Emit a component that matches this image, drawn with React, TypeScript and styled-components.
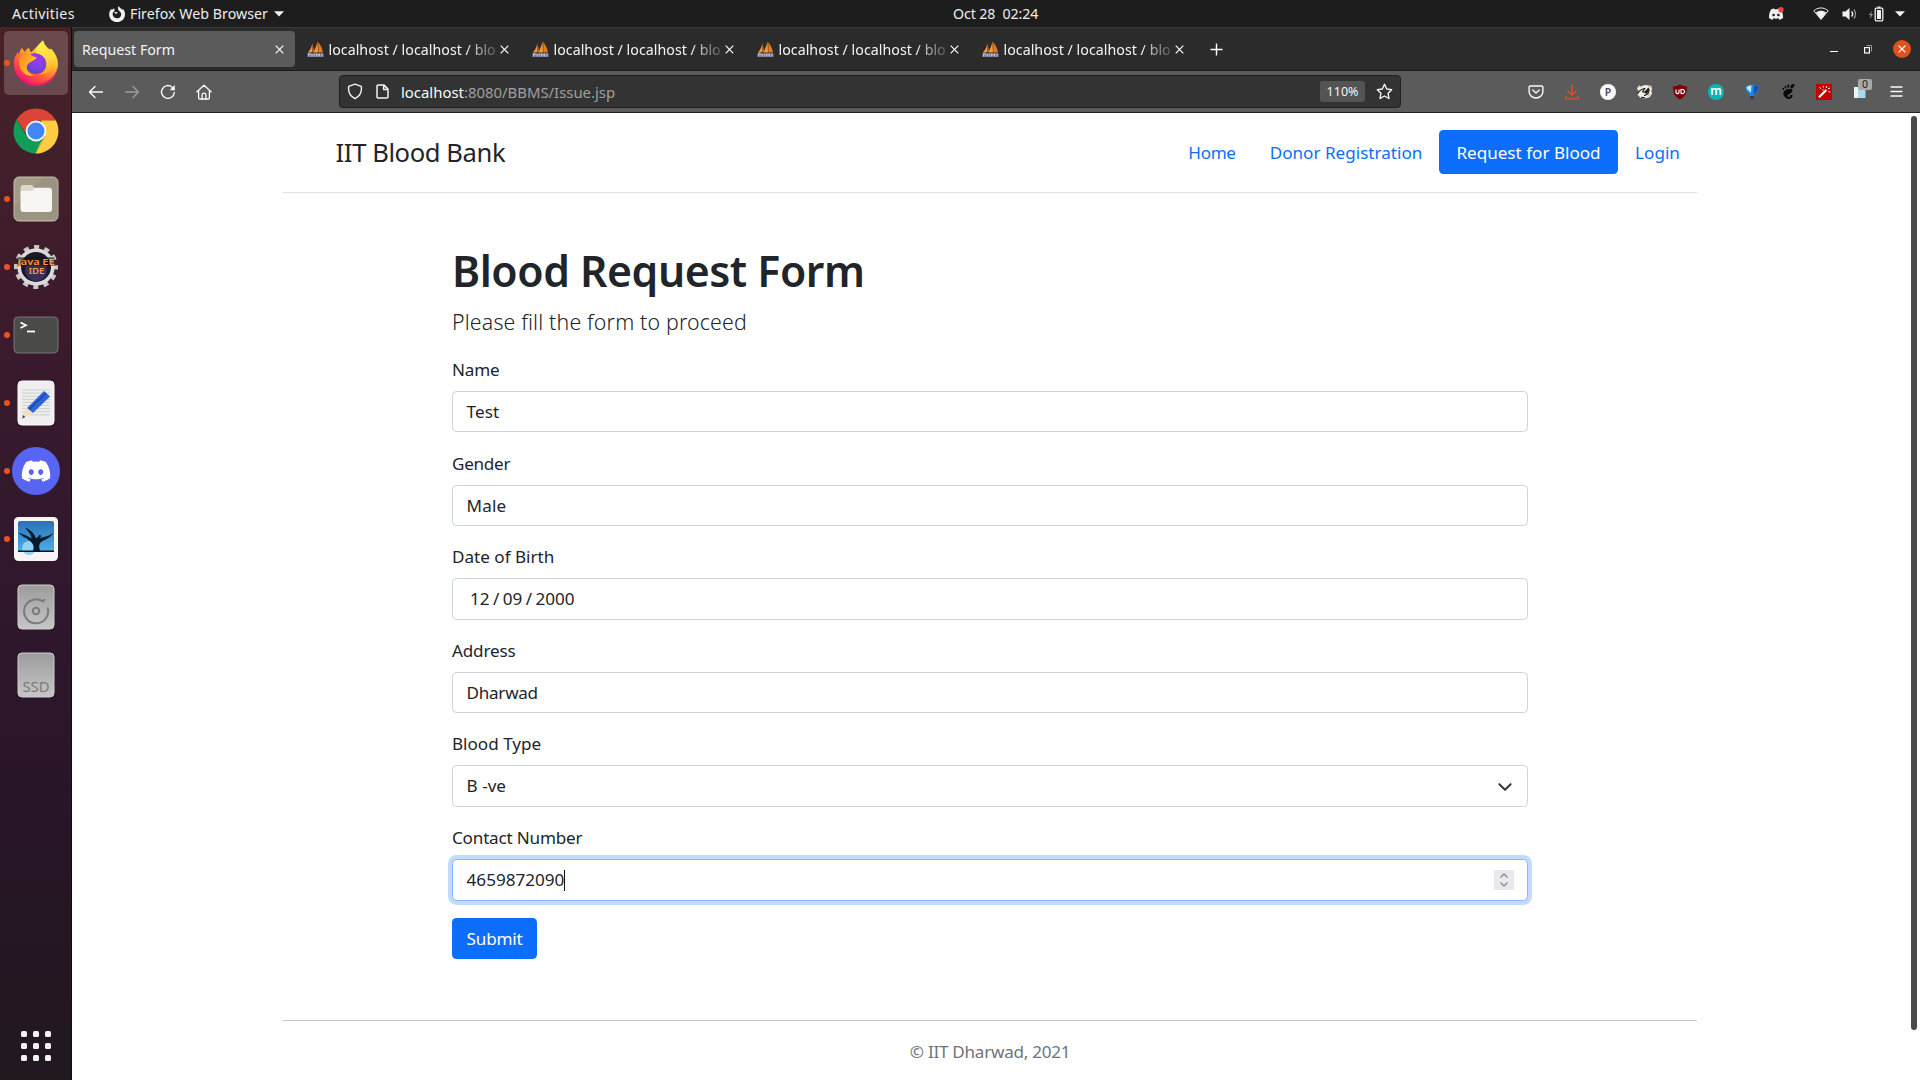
import React from 'react';
import styled, { createGlobalStyle, css } from 'styled-components';
import { FaDiscord } from 'react-icons/fa';
import { SiGnome } from 'react-icons/si';

const GlobalStyle = createGlobalStyle`
  *, *::before, *::after { box-sizing: border-box; }
  body {
    margin: 0;
    background: #fff;
    overflow: hidden;
    font-family: "Noto Sans", "Open Sans", sans-serif;
  }
  svg { display: block; flex: none; }
`;

/* ---------- desktop shell ---------- */

const Desktop = styled.div`
  display: flex;
  flex-direction: column;
  width: 1920px;
  height: 1080px;
  overflow: hidden;
`;

const SystemBar = styled.div`
  display: grid;
  grid-template-columns: 1fr 86px 1fr;
  align-items: center;
  flex: none;
  height: 27px;
  padding-left: 72px;
  background: #1d1d1d;
  color: #ededed;
  font-size: 14.2px;
  line-height: 26px;
  white-space: pre;
`;

const SystemLeft = styled.div`
  display: flex;
  align-items: center;
  margin-left: -60px;
`;

const Activities = styled.span`
  letter-spacing: 0.38px;
  width: 97px;
`;

const AppMenu = styled.div`
  display: flex;
  align-items: center;

  span {
    margin: 0 6px 0 5px;
    letter-spacing: 0.04px;
  }
`;

const Clock = styled.div`
  letter-spacing: -0.1px;
`;

const Tray = styled.div`
  display: flex;
  align-items: center;
  justify-content: flex-end;
  padding-right: 15px;
`;

const TrayIcon = styled.span<{ $gap: number }>`
  margin-left: ${(p) => p.$gap}px;
`;

const Workspace = styled.div`
  display: flex;
  flex: 1;
  min-height: 0;
`;

/* ---------- dock ---------- */

const Dock = styled.nav`
  display: flex;
  flex-direction: column;
  flex: none;
  width: 72px;
  padding-top: 2px;
  border-right: 1px solid #120a10;
  background: linear-gradient(
    180deg,
    #4a2023 0%,
    #42202a 11%,
    #3d1b2c 24%,
    #35192d 42%,
    #2f172c 56%,
    #291528 72%,
    #241723 88%,
    #211820 100%
  );
`;

const DockItem = styled.div`
  display: grid;
  grid-template-columns: 10px 52px;
  align-items: center;
  height: 68px;
`;

const RunningDot = styled.i<{ $on?: boolean }>`
  width: 6px;
  height: 6px;
  margin-left: 4px;
  border-radius: 50%;
  background: ${(p) => (p.$on ? '#e95420' : 'transparent')};
  z-index: 1;
`;

const DockTile = styled.div<{ $active?: boolean }>`
  display: flex;
  align-items: center;
  justify-content: center;
  width: 64px;
  height: 64px;
  margin-left: -6px;
  border-radius: 5px;
  background: ${(p) => (p.$active ? 'rgba(255,255,255,0.19)' : 'transparent')};
`;

const AppGrid = styled.div`
  display: grid;
  grid-template-columns: repeat(3, 6px);
  grid-auto-rows: 6px;
  gap: 6px;
  margin: auto 0 19px 21px;

  i {
    border-radius: 1.5px;
    background: #f3f1f0;
  }
`;

/* ---------- browser chrome ---------- */

const Browser = styled.main`
  display: flex;
  flex-direction: column;
  flex: 1;
  min-width: 0;
`;

const TabBar = styled.div`
  display: flex;
  align-items: center;
  height: 44px;
  padding: 0 9px 0 2px;
  border-top: 1px solid #3a3a3a;
  border-bottom: 1px solid #1a1a1a;
  background: #2b2b2b;
  color: #f4f4f4;
  font-size: 14.2px;
  line-height: 20px;
  white-space: nowrap;
`;

const Tab = styled.div<{ $active?: boolean }>`
  display: flex;
  align-items: center;
  height: 36px;
  ${(p) =>
    p.$active
      ? css`
          width: 221px;
          margin-right: 2px;
          padding: 0 11px 0 8px;
          border-radius: 4px;
          background: #5b5b5b;
        `
      : css`
          width: 225px;
          padding: 0 13.5px 0 9.5px;
        `}
`;

const TabTitle = styled.span<{ $fade?: boolean }>`
  flex: 1;
  padding-top: 2px;
  overflow: hidden;
  ${(p) =>
    p.$fade &&
    css`
      margin-left: 5px;
      letter-spacing: 0.04px;
      mask-image: linear-gradient(90deg, #000 136px, rgba(0, 0, 0, 0.12) 170px);
    `}
`;

const TabStripEnd = styled.div`
  display: flex;
  align-items: center;
  justify-content: space-between;
  flex: 1;
  padding-left: 13px;
`;

const WindowButtons = styled.div`
  display: flex;
  align-items: center;
`;

const Minimise = styled.i`
  width: 8px;
  height: 1px;
  margin: 5px 26px 0 0;
  background: #fff;
`;

const CloseWindow = styled.div`
  display: flex;
  align-items: center;
  justify-content: center;
  width: 18px;
  height: 18px;
  margin-left: 21px;
  border-radius: 50%;
  background: #e2501c;
`;

const NavBar = styled.div`
  display: flex;
  align-items: center;
  height: 42px;
  border-bottom: 1px solid #202020;
  background: #5b5b5b;
  color: #fbfbfb;
`;

const NavButtons = styled.div`
  display: flex;
  align-items: center;
  width: 267px;
  padding-left: 16px;
  gap: 20px;
`;

const UrlBar = styled.div`
  display: flex;
  align-items: center;
  width: 1062px;
  height: 33px;
  padding: 0 7px;
  border: 1px solid #1f1f1f;
  border-radius: 4px;
  background: #333;
`;

const UrlIcons = styled.span`
  display: flex;
  align-items: center;
  gap: 13px;
`;

const Address = styled.span`
  flex: 1;
  margin-left: 12px;
  color: #a0a0a0;
  font-size: 14.9px;
  line-height: 20px;

  b {
    color: #fbfbfb;
    font-weight: 400;
  }
`;

const ZoomChip = styled.span`
  width: 45px;
  height: 21px;
  margin-right: 11px;
  border-radius: 3px;
  background: #545454;
  color: #f5f5f5;
  font-size: 12.5px;
  line-height: 21px;
  text-align: center;
`;

const Extensions = styled.div`
  display: grid;
  grid-template-columns: repeat(11, 36px);
  justify-items: center;
  align-items: center;
  margin-left: 117px;
`;

const RoundBadge = styled.span<{ $teal?: boolean }>`
  width: 16px;
  height: 16px;
  border-radius: 50%;
  background: ${(p) => (p.$teal ? '#08b5b5' : '#fafafa')};
  color: ${(p) => (p.$teal ? '#fff' : '#4c4c4c')};
  font-size: ${(p) => (p.$teal ? 12 : 10.5)}px;
  font-weight: 600;
  line-height: ${(p) => (p.$teal ? 14 : 16)}px;
  text-align: center;
`;

const NoteButton = styled.span`
  position: relative;
`;

const NoteCount = styled.span`
  position: absolute;
  top: -6px;
  left: 4px;
  width: 14px;
  height: 11px;
  border-radius: 2px;
  background: #a9a9a9;
  color: #1c1c1c;
  font-size: 10.5px;
  line-height: 11px;
  text-align: center;
`;

/* ---------- web page ---------- */

const Viewport = styled.div`
  display: flex;
  justify-content: space-between;
  flex: 1;
  min-height: 0;
  background: #fff;
  color: #212529;
  font-size: 17.1px;
  line-height: 26.4px;
`;

const Page = styled.div`
  width: 1414px;
  margin-left: 211px;
`;

const ScrollThumb = styled.div`
  width: 6px;
  height: 914px;
  margin: 3px 3px 0 0;
  border-radius: 3px;
  background: #4a4a4a;
`;

const SiteHeader = styled.header`
  display: flex;
  align-items: center;
  justify-content: space-between;
  height: 80px;
  padding: 0 0 2px 52.6px;
  border-bottom: 1px solid #dee2e6;
`;

const Brand = styled.span`
  padding-top: 3px;
  font-size: 25.6px;
  letter-spacing: -0.41px;
`;

const SiteNav = styled.nav`
  display: flex;
`;

const NavLink = styled.a<{ $active?: boolean; $width: number; $track?: number }>`
  width: ${(p) => p.$width}px;
  height: 44px;
  border-radius: 4.4px;
  background: ${(p) => (p.$active ? '#0d6efd' : 'transparent')};
  color: ${(p) => (p.$active ? '#fff' : '#0d6efd')};
  letter-spacing: ${(p) => p.$track ?? 0}px;
  line-height: 45px;
  text-align: center;
`;

const FormColumn = styled.form`
  width: 1076px;
  margin: 51px auto 0 169px;
`;

const Title = styled.h1`
  margin: 0;
  font-size: 42.7px;
  font-weight: 600;
  line-height: 53px;
  letter-spacing: -0.44px;
`;

const Lead = styled.p`
  margin: 8px 0 18px;
  font-size: 21.3px;
  font-weight: 300;
  line-height: 33px;
  letter-spacing: 0.18px;
`;

const Field = styled.div`
  height: 93.6px;
`;

const Label = styled.label<{ $track?: number }>`
  display: block;
  padding-top: 1px;
  margin-bottom: 7.7px;
  letter-spacing: ${(p) => p.$track ?? 0}px;
`;

const Control = styled.div<{ $tall?: boolean; $focus?: boolean; $track?: number }>`
  display: flex;
  align-items: center;
  justify-content: space-between;
  height: ${(p) => (p.$tall ? 41.7 : 41.1)}px;
  padding: 1px 13px 0 13.6px;
  border: 1px solid ${(p) => (p.$focus ? '#86b7fe' : '#ced4da')};
  border-radius: 4.4px;
  background: #fff;
  letter-spacing: ${(p) => p.$track ?? 0}px;
  ${(p) =>
    p.$focus &&
    css`
      box-shadow: 0 0 0 4px #c2dbfe;
    `}
`;

const DateParts = styled.span`
  display: flex;
  gap: 3.4px;
  padding-left: 3.4px;
`;

const Caret = styled.span`
  display: flex;
  align-items: center;

  &::after {
    content: '';
    width: 1px;
    height: 21px;
    background: #111;
  }
`;

const Spinner = styled.span`
  display: flex;
  align-items: center;
  justify-content: center;
  width: 20px;
  height: 20px;
  background: #e9e9ed;
`;

const Submit = styled.button`
  display: block;
  width: 85px;
  height: 41px;
  padding: 0;
  border: 0;
  border-radius: 4.4px;
  background: #0d6efd;
  color: #fff;
  font: inherit;
  line-height: 41px;
  letter-spacing: -0.2px;
`;

const SiteFooter = styled.footer`
  margin-top: 61px;
  padding-top: 18px;
  border-top: 1px solid #c4c5c6;
  color: #6c757d;
  letter-spacing: -0.27px;
  text-align: center;
`;

/* ---------- dock artwork ---------- */

const FirefoxArt = () => (
  <svg width="46" height="48" viewBox="0 0 46 48">
    <defs>
      <linearGradient id="ffBody" x1="0.85" y1="0.1" x2="0.25" y2="0.95">
        <stop offset="0" stopColor="#fff44f" />
        <stop offset="0.35" stopColor="#ffb52a" />
        <stop offset="0.62" stopColor="#ff6a33" />
        <stop offset="0.85" stopColor="#fb3452" />
        <stop offset="1" stopColor="#e3127c" />
      </linearGradient>
      <radialGradient id="ffGlobe" cx="0.6" cy="0.3" r="0.75">
        <stop offset="0" stopColor="#a235e6" />
        <stop offset="0.55" stopColor="#7a44e8" />
        <stop offset="1" stopColor="#5547b8" />
      </radialGradient>
      <linearGradient id="ffHead" x1="0" y1="0" x2="1" y2="0.6">
        <stop offset="0" stopColor="#ff8a1e" />
        <stop offset="1" stopColor="#ffc53a" />
      </linearGradient>
      <linearGradient id="ffTail" x1="0.4" y1="0" x2="0.6" y2="1">
        <stop offset="0" stopColor="#fff24a" />
        <stop offset="0.6" stopColor="#ffd43b" />
        <stop offset="1" stopColor="#ff9a2c" />
      </linearGradient>
    </defs>
    <path d="M9 9c1 1 2 3 2.600 4 1.500-2.400 3-3.800 4.600-4.600 0 2 .8 3.600 2 4.800L30 1.500c1 4 3.500 7 6.500 9.500l1.500-1.500c4.500 5 7 10 7 15.500C45 37.500 35 47 23 47S.8 37.500.8 25C.8 19 3.500 14.500 5 13c0 1 .3 2 .7 2.800C6.300 13 7.500 10.500 9 9z" fill="url(#ffBody)" />
    <path d="M2 31c3 9 11 14 20 14 11 0 20-7 22.500-17C44 40 34.500 47 23 47 12.500 47 4 40.500 2 31z" fill="#e3127c" opacity=".75" />
    <circle cx="23" cy="24.500" r="10.500" fill="url(#ffGlobe)" />
    <path d="M30 1.500c-4.500 3.500-7.300 8-7 13 6 .5 10 4.500 10.500 10 .3 5-2.500 9.500-7 11 8 0 14.500-5 15.500-13 0-5-2-8.500-4.500-11.500C33.500 8.500 31 5.500 30 1.500z" fill="url(#ffTail)" />
    <path d="M6 20c2-3.500 6-5.500 9.500-5 3 .5 4.500 3 8 3.200 0 2-3 3.300-5 4.200-3.500 1.500-5.500 4.600-4.500 8 1 3.500 4.500 5.500 8.500 5.500-6 2.500-13.500-1-15.500-7.500C6.200 25.500 6 22.500 6 20z" fill="url(#ffHead)" />
  </svg>
);

const ChromeArt = () => (
  <svg width="46" height="46" viewBox="-23 -23 46 46">
    <path d="M-19.500-11.200A22.500 22.500 0 0 1 19.500-11.200L19.500-10.200H0L-9.600 3z" fill="#db4437" />
    <path d="M-19.500-11.200A22.500 22.500 0 0 0-.6 22.500L9 5.500-9 5.200z" fill="#109d58" />
    <path d="M19.900-10.400A22.500 22.500 0 0 1-.6 22.500L9 5.200 5-10.400z" fill="#ffcd41" />
    <path d="M10 4L-.6 22.500 4 12z" fill="#d9a52c" />
    <circle r="10.400" fill="#f4f6fb" />
    <circle r="8.500" fill="#4285f4" />
  </svg>
);

const FilesArt = () => (
  <svg width="46" height="46" viewBox="0 0 46 46">
    <rect x="1" y="1" width="44" height="44" rx="5" fill="#a49c89" stroke="#c9c1ad" strokeWidth="1" />
    <path d="M1.500 30L30 1.500H41a4 4 0 0 1 4 4V40a4 4 0 0 1-4 4H5a4 4 0 0 1-3.500-4z" fill="#968e7c" opacity=".55" />
    <path d="M7.500 12a3 3 0 0 1 3-3h7.500c2 0 2.500 3 4.500 3H37v6H7.500z" fill="#dcd6c8" />
    <path d="M7.500 17c0-1.500 1-2.200 2.500-2.200h8.500c2 0 2.500-3 4.500-3H36a3 3 0 0 1 3 3V33a3 3 0 0 1-3 3H10.500a3 3 0 0 1-3-3z" fill="#f7f6f5" />
  </svg>
);

const EclipseArt = () => (
  <svg width="46" height="46" viewBox="-23 -23 46 46">
    <circle r="19.500" fill="none" stroke="#c9c9c9" strokeWidth="5" strokeDasharray="5 5.210" strokeDashoffset="2.500" />
    <circle r="16.800" fill="#1d1726" stroke="#dadada" strokeWidth="3.600" />
    <circle r="11" cy="3" fill="#4a3a77" opacity=".65" />
    <path d="M-18.500-9.800h37v8.600h-37z" fill="#1a1210" opacity=".65" />
    <g fill="#ff9a3c" fontFamily="Noto Sans, sans-serif" fontWeight="600" fontSize="9.400">
      <text x="-18.500" y="-2.400" textLength="37" lengthAdjust="spacingAndGlyphs">Java EE</text>
      <text x="-7.500" y="7.400" textLength="16" lengthAdjust="spacingAndGlyphs">IDE</text>
    </g>
  </svg>
);

const TerminalArt = () => (
  <svg width="46" height="38" viewBox="0 0 46 38">
    <rect x="1" y="1" width="44" height="36" rx="4" fill="#4b4b4a" stroke="#777" />
    <path d="M7.500 6.500L13 9.300 7.500 12" fill="none" stroke="#fff" strokeWidth="1.800" />
    <path d="M14 15.500h8" stroke="#fff" strokeWidth="1.800" />
  </svg>
);

const EditorArt = () => (
  <svg width="38" height="46" viewBox="0 0 38 46">
    <rect x="1" y="1" width="36" height="44" rx="4" fill="#efefef" stroke="#fafafa" />
    <path d="M5 10h28M5 13.100h28M5 16.200h28M5 19.300h28M5 22.400h28M5 25.500h28M5 28.600h28M5 31.700h28M5 34.800h28" stroke="#c9c9c9" strokeWidth=".9" />
    <path d="M27 11l6 5.500L16 33l-6-5z" fill="#2f65dc" />
    <path d="M29 13.200l-17 16.500" stroke="#1f4bb4" strokeWidth="1.800" />
    <path d="M10 28l5.500 5L5 38z" fill="#fbdcb8" />
    <path d="M6.300 35.200l2 1.800L5 38.500z" fill="#333" />
  </svg>
);

const DiscordArt = () => (
  <svg width="48" height="48" viewBox="0 0 48 48">
    <circle cx="24" cy="24" r="24" fill="#5865f2" />
    <g transform="translate(8.500 8.500)">
      <FaDiscord size={31} color="#fff" />
    </g>
  </svg>
);

const ImageViewerArt = () => (
  <svg width="46" height="46" viewBox="0 0 46 46">
    <defs>
      <linearGradient id="sky" x1="0" y1="0" x2="0" y2="1">
        <stop offset="0" stopColor="#2b71b4" />
        <stop offset="1" stopColor="#4cb0e8" />
      </linearGradient>
    </defs>
    <rect x="1" y="1" width="44" height="44" rx="4.500" fill="#f6f6f6" />
    <rect x="5" y="5" width="36" height="31" rx="2" fill="url(#sky)" />
    <circle cx="16" cy="32" r="7" fill="#8fd3f5" />
    <path d="M5 34.500h36V36H5z" fill="#06121f" />
    <path d="M20 35c1-4 .8-6-1.500-8.500C16 23 10 21.500 5.500 16.500c5 2.500 9.500 3 13 6 0-4-4-8-6.500-11C18.500 14 21.500 18 23 22.500c1-.8 2.500-1.800 3-3.500l2.500.5c-.5 1.500-1.200 2.200-2 3.300 3.500-2.200 8.500-1.600 14-6.300C37 23 31 23.500 27.500 26.500c-1.800 2-1.600 5-.3 8.500z" fill="#071a2c" />
  </svg>
);

const DriveArt = ({ ssd }: { ssd?: boolean }) => (
  <svg width="38" height="46" viewBox="0 0 38 46">
    <defs>
      <linearGradient id="drive" x1="0" y1="0" x2="0" y2="1">
        <stop offset="0" stopColor="#9c9c9c" />
        <stop offset="1" stopColor="#c6c6c6" />
      </linearGradient>
    </defs>
    <rect x="1" y="1" width="36" height="44" rx="4" fill="url(#drive)" stroke="#cfcfcf" />
    {ssd ? (
      <text x="5.500" y="39.500" textLength="27" lengthAdjust="spacingAndGlyphs" fontFamily="Noto Sans, sans-serif" fontSize="14.800" fill="#7b7b7b">SSD</text>
    ) : (
      <g fill="none" stroke="#7b7b7b" strokeWidth="2">
        <path d="M30.500 23.500a12 12 0 1 1-4.500-6l2-2.500" />
        <circle cx="19" cy="27" r="3.200" />
      </g>
    )}
  </svg>
);

/* ---------- small glyphs ---------- */

const CloseGlyph = ({ size = 9, width = 1.2 }: { size?: number; width?: number }) => (
  <svg width={size} height={size} viewBox="0 0 9 9">
    <path d="M.7.7l7.600 7.600M8.300.7L.7 8.300" stroke="#fff" strokeWidth={width} />
  </svg>
);

const CaretDown = () => (
  <svg width="10" height="6" viewBox="0 0 10 6">
    <path d="M0 .3h10L5 5.500z" fill="#f2f2f2" />
  </svg>
);

const FirefoxMono = () => (
  <svg width="16" height="16" viewBox="0 0 16 16">
    <path d="M9.600 0c.6 1.500 2.500 2.300 3.800 4l.4-1.200C15.200 4.300 16 6.200 16 8.400 16 12.600 12.400 16 8 16S.2 12.600.2 8.400C.2 6 1 4.200 2.400 2.700l.4 1.500C3.500 3.200 4.500 2.600 5.300 2.500L5.700 5c-1.300.6-2.100 1.800-2.100 3.300C3.600 10.600 5.600 12.300 8 12.300s4.200-1.500 4.200-3.900c0-1.700-.8-2.500-1.900-3.400C8.800 3.800 8.600 1.500 9.600 0zM5 6.200l3.600-.1c-.1 1.100-.8 1.500-1.700 1.900z" fill="#f2f2f2" />
  </svg>
);

const Sails = () => (
  <svg width="17" height="17" viewBox="0 0 17 17">
    <path d="M5.500 1.500C5 5.500 3.500 8.500.8 11.800l4.200-.6zM10.500.2C9.500 5 8 8.500 6 11.500h5z" fill="#f29a3c" />
    <path d="M11.300 1c1.800 3 4.200 6 4.700 10.500h-4.700zM5.800 3l1 6.500-1.600 2z" fill="#ec7b12" />
    <path d="M.5 12.200h16V16H.5z" fill="#77769a" />
    <path d="M1.500 15.500v-2.700h1.700v1.400M5 15.500v-2.700M7.200 12.800v2.700M9.500 15.500v-2.700l1.500 1.500 1.500-1.500v2.700M15 12.800v2.700" stroke="#d7d6ea" strokeWidth=".8" fill="none" />
  </svg>
);

const Arrow = ({ forward }: { forward?: boolean }) => (
  <svg width="16" height="16" viewBox="0 0 16 16" fill="none" stroke="#fbfbfb" strokeWidth="1.400" strokeLinecap="round" strokeLinejoin="round" opacity={forward ? 0.4 : 1}>
    <path d={forward ? 'M1.500 8h13M9 2.500L14.500 8 9 13.500' : 'M14.500 8h-13M7 2.500L1.500 8 7 13.500'} />
  </svg>
);

const Reload = () => (
  <svg width="16" height="16" viewBox="0 0 16 16">
    <path d="M14.300 8.500A6.400 6.400 0 1 1 12.200 3.200" fill="none" stroke="#fbfbfb" strokeWidth="1.400" strokeLinecap="round" />
    <path d="M14.800 1v5.200H9.600z" fill="#fbfbfb" />
  </svg>
);

const Home = () => (
  <svg width="16" height="16" viewBox="0 0 16 16" fill="none" stroke="#fbfbfb" strokeWidth="1.300" strokeLinejoin="round" strokeLinecap="round">
    <path d="M.9 7.800L8 1.200l7.100 6.600M2.600 6.500v7.200c0 .8.500 1.300 1.300 1.300h8.200c.8 0 1.300-.5 1.300-1.300V6.500" />
    <path d="M6.100 15v-4.200c0-1 .6-1.600 1.900-1.600s1.900.6 1.900 1.600V15" />
  </svg>
);

const Shield = () => (
  <svg width="16" height="17" viewBox="0 0 16 17">
    <path d="M8 1.200L14.300 3.300C15 8.500 13 13 8 15.700 3 13 1 8.500 1.700 3.300z" fill="none" stroke="#f5f5f5" strokeWidth="1.400" strokeLinejoin="round" />
  </svg>
);

const PageGlyph = () => (
  <svg width="13" height="15" viewBox="0 0 13 15">
    <path d="M2.300.9h5.500l4.200 4.200v7.700c0 .8-.5 1.300-1.300 1.300H2.300C1.500 14.100 1 13.600 1 12.800V2.200C1 1.400 1.500.9 2.300.9zM7.600 1v4.400H12" fill="none" stroke="#f5f5f5" strokeWidth="1.500" strokeLinejoin="round" />
  </svg>
);

const Star = () => (
  <svg width="17" height="17" viewBox="0 0 17 17">
    <path d="M8.500 1.300l2.200 4.700 5 .7-3.600 3.600.9 5.200-4.500-2.500L4 15.500l.9-5.200L1.300 6.700l5-.7z" fill="none" stroke="#fbfbfb" strokeWidth="1.300" strokeLinejoin="round" />
  </svg>
);

const Pocket = () => (
  <svg width="16" height="14" viewBox="0 0 16 14" fill="none" stroke="#fbfbfb" strokeWidth="1.400" strokeLinecap="round" strokeLinejoin="round">
    <path d="M2.400 1h11.200c.8 0 1.300.5 1.300 1.300v4C14.900 10 12 13 8 13S1.100 10 1.100 6.300v-4C1.100 1.500 1.600 1 2.400 1z" />
    <path d="M4.800 5L8 8l3.200-3" />
  </svg>
);

const Download = () => (
  <svg width="14" height="16" viewBox="0 0 14 16" fill="none" stroke="#e2501c" strokeWidth="1.400" strokeLinecap="round" strokeLinejoin="round">
    <path d="M7 1v10M2.800 7L7 11.200 11.200 7M.8 12.500v1c0 .9.500 1.400 1.400 1.400h9.600c.9 0 1.400-.5 1.400-1.400v-1" />
  </svg>
);

const Badger = () => (
  <svg width="17" height="15" viewBox="0 0 17 15">
    <path d="M.8 4L3 1.500l2.800.8L8.500 1l5 .6 2.200.3.4 3-.8 2.600.8 2-2.500 3.800-5 1.200-4.600-.8L3 12l-2-1.500L2.600 7z" fill="#f4eee4" />
    <path d="M1.300 10.300C2.500 7.500 5.500 5 9 4.200L6.500 7.800l2.300.4 4-4.400M5 13.200l4 .6M8 11.500c2.500 0 4-1.700 5-3.500" fill="none" stroke="#1b1917" strokeWidth="1.100" strokeLinejoin="round" />
    <path d="M8.500 8.500l4.500-4 1 2-4 3.500z" fill="#1b1917" />
    <path d="M1 3.800L3.500 2l2 1M12.500 2l2.800.6v2M14 10l-2 2.500" stroke="#d89a5c" strokeWidth="1" fill="none" />
  </svg>
);

const UBlock = () => (
  <svg width="16" height="16" viewBox="0 0 16 16">
    <path d="M8 .5c2 1.400 4.500 1.700 6.800 1.800.4 6-.8 10.200-6.800 13.200C2 12.500.8 8.300 1.200 2.300 3.500 2.200 6 1.900 8 .5z" fill="#7c0004" />
    <path d="M4 5.500v2.700c0 1.800 3 1.800 3 0V5.500M9 5.500v4c2 .3 3.600-.3 3.600-2S11 5.300 9 5.500z" fill="none" stroke="#fff" strokeWidth="1.200" />
  </svg>
);

const Balloon = () => (
  <svg width="16" height="16" viewBox="0 0 16 16">
    <path d="M8 .8c4 0 6.600 1.400 6.600 3.500C14.600 7 11 9 9.700 12.500H6.300C5 9 1.400 7 1.400 4.300 1.400 2.200 4 .8 8 .8z" fill="#1b87e6" />
    <path d="M2.500 3.200C4 1.500 7 1.300 7.500 1.500L7 8.500C6 7.500 2.500 6 2.500 3.200z" fill="#bfe6ff" />
    <path d="M10 1.300c3 .4 4.300 1.700 4.300 3C14 6.500 11 8.500 9.500 11z" fill="#0b50b4" />
    <path d="M6.500 12h3v2.800h-3z" fill="#24344c" />
  </svg>
);

const Wand = () => (
  <svg width="16" height="16" viewBox="0 0 16 16">
    <path d="M0 0h16v16H0z" fill="#c40000" />
    <path d="M3 13.200L10.300 6" stroke="#fff" strokeWidth="2.200" />
    <path d="M3.500 3.500l1.600 1M7 1.800l.6 1.700M11 2l-.8 2M14 4l-2.200 1M12.500 7.500l1.800.7M6.300 5.800l1.300.2" stroke="#fff" strokeWidth="1" />
  </svg>
);

const Notes = () => (
  <svg width="12" height="14" viewBox="0 0 12 14">
    <path d="M0 2h5v11H0z" fill="#eef3f5" />
    <path d="M4 1h7.500v12H4z" fill="#a5dcee" />
  </svg>
);

const Burger = () => (
  <svg width="13" height="11" viewBox="0 0 13 11">
    <path d="M.5 1h12M.5 5.500h12M.5 10h12" stroke="#fbfbfb" strokeWidth="1.300" />
  </svg>
);

const dockApps = [
  { id: 'firefox', art: <FirefoxArt />, running: true, active: true },
  { id: 'chrome', art: <ChromeArt /> },
  { id: 'files', art: <FilesArt />, running: true },
  { id: 'eclipse', art: <EclipseArt />, running: true },
  { id: 'terminal', art: <TerminalArt />, running: true },
  { id: 'editor', art: <EditorArt />, running: true },
  { id: 'discord', art: <DiscordArt />, running: true },
  { id: 'viewer', art: <ImageViewerArt />, running: true },
  { id: 'disk', art: <DriveArt /> },
  { id: 'ssd', art: <DriveArt ssd /> },
];

export default function App() {
  return (
    <Desktop>
      <GlobalStyle />
      <SystemBar>
        <SystemLeft>
          <Activities>Activities</Activities>
          <AppMenu>
            <FirefoxMono />
            <span>Firefox Web Browser</span>
            <CaretDown />
          </AppMenu>
        </SystemLeft>
        <Clock>{'Oct 28  02:24'}</Clock>
        <Tray>
          <TrayIcon $gap={0}>
            <svg width="16" height="14" viewBox="0 0 16 14">
              <path d="M3.200 2.200C4.500 1.500 5.500 1.400 6 1.400l.4.800h3.200l.4-.8c.5 0 1.500.1 2.800.8C14.500 5 15.200 8 15 11c-1.200 1-2.500 1.500-3.700 1.800l-.8-1.500c-1.600.5-3.400.5-5 0l-.8 1.500C3.500 12.500 2.200 12 1 11c-.2-3 .5-6 2.200-8.800z" fill="#eee" />
              <circle cx="5.600" cy="8" r="1.300" fill="#1d1d1d" />
              <circle cx="10.400" cy="8" r="1.300" fill="#1d1d1d" />
              <circle cx="13" cy="2.800" r="2.700" fill="#ef4444" />
            </svg>
          </TrayIcon>
          <TrayIcon $gap={29}>
            <svg width="16" height="13" viewBox="0 0 16 13">
              <path d="M.8 3.800C5 0 11 0 15.200 3.800L8 12.500z" fill="none" stroke="#f2f2f2" strokeWidth="1" />
              <path d="M2.800 5.500c3.200-2.300 7.200-2.300 10.400 0L8 12.500z" fill="#f2f2f2" />
            </svg>
          </TrayIcon>
          <TrayIcon $gap={13}>
            <svg width="15" height="14" viewBox="0 0 15 14">
              <path d="M.5 4.500h3L7.500 1v12l-4-3.500h-3z" fill="#f2f2f2" />
              <path d="M9.500 4.500c1.300 1.400 1.300 3.600 0 5" fill="none" stroke="#f2f2f2" strokeWidth="1.400" />
              <path d="M11.800 2.500c2.300 2.500 2.300 6.500 0 9" fill="none" stroke="#999" strokeWidth="1.200" />
            </svg>
          </TrayIcon>
          <TrayIcon $gap={11}>
            <svg width="16" height="16" viewBox="0 0 16 16">
              <path d="M4 4.500L1 9h1.800L2 13l3-5H3z" fill="#999" />
              <path d="M9.500.5h3v1.300h-3z" fill="#f2f2f2" />
              <rect x="7.200" y="2.200" width="7.600" height="12.600" rx="1" fill="none" stroke="#f2f2f2" strokeWidth="1.300" />
              <path d="M9 4h4v9H9z" fill="#f2f2f2" />
            </svg>
          </TrayIcon>
          <TrayIcon $gap={11}>
            <CaretDown />
          </TrayIcon>
        </Tray>
      </SystemBar>

      <Workspace>
        <Dock>
          {dockApps.map((a) => (
            <DockItem key={a.id}>
              <RunningDot $on={a.running} />
              <DockTile $active={a.active}>{a.art}</DockTile>
            </DockItem>
          ))}
          <AppGrid>
            {Array.from({ length: 9 }, (_, i) => (
              <i key={i} />
            ))}
          </AppGrid>
        </Dock>

        <Browser>
          <TabBar>
            <Tab $active>
              <TabTitle>Request Form</TabTitle>
              <CloseGlyph />
            </Tab>
            {[1, 2, 3, 4].map((n) => (
              <Tab key={n}>
                <Sails />
                <TabTitle $fade>localhost / localhost / blo</TabTitle>
                <CloseGlyph />
              </Tab>
            ))}
            <TabStripEnd>
              <svg width="13" height="13" viewBox="0 0 13 13">
                <path d="M6.500.5v12M.5 6.500h12" stroke="#fff" strokeWidth="1.400" />
              </svg>
              <WindowButtons>
                <Minimise />
                <svg width="8" height="9" viewBox="0 0 8 9">
                  <path d="M2.500.5h5v6" fill="none" stroke="#999" strokeWidth="1" />
                  <rect x=".6" y="2.600" width="4.800" height="5.400" fill="none" stroke="#fff" strokeWidth="1.200" />
                </svg>
                <CloseWindow>
                  <CloseGlyph size={8} width={1.5} />
                </CloseWindow>
              </WindowButtons>
            </TabStripEnd>
          </TabBar>

          <NavBar>
            <NavButtons>
              <Arrow />
              <Arrow forward />
              <Reload />
              <Home />
            </NavButtons>
            <UrlBar>
              <UrlIcons>
                <Shield />
                <PageGlyph />
              </UrlIcons>
              <Address>
                <b>localhost</b>:8080/BBMS/Issue.jsp
              </Address>
              <ZoomChip>110%</ZoomChip>
              <Star />
            </UrlBar>
            <Extensions>
              <Pocket />
              <Download />
              <RoundBadge>P</RoundBadge>
              <Badger />
              <UBlock />
              <RoundBadge $teal>m</RoundBadge>
              <Balloon />
              <SiGnome size={15} color="#0a0a0a" />
              <Wand />
              <NoteButton>
                <Notes />
                <NoteCount>0</NoteCount>
              </NoteButton>
              <Burger />
            </Extensions>
          </NavBar>

          <Viewport>
            <Page>
              <SiteHeader>
                <Brand>IIT Blood Bank</Brand>
                <SiteNav>
                  <NavLink $width={82} $track={-0.33}>Home</NavLink>
                  <NavLink $width={186}>Donor Registration</NavLink>
                  <NavLink $width={179} $active>Request for Blood</NavLink>
                  <NavLink $width={79}>Login</NavLink>
                </SiteNav>
              </SiteHeader>

              <FormColumn>
                <Title>Blood Request Form</Title>
                <Lead>Please fill the form to proceed</Lead>
                <Field>
                  <Label $track={-0.19}>Name</Label>
                  <Control $track={0.12}>Test</Control>
                </Field>
                <Field>
                  <Label $track={-0.26}>Gender</Label>
                  <Control $track={0.12}>Male</Control>
                </Field>
                <Field>
                  <Label>Date of Birth</Label>
                  <Control $tall>
                    <DateParts>
                      <span>12</span>
                      <span>/</span>
                      <span>09</span>
                      <span>/</span>
                      <span>2000</span>
                    </DateParts>
                  </Control>
                </Field>
                <Field>
                  <Label $track={-0.17}>Address</Label>
                  <Control $track={-0.29}>Dharwad</Control>
                </Field>
                <Field>
                  <Label>Blood Type</Label>
                  <Control>
                    B -ve
                    <svg width="18" height="18" viewBox="0 0 16 16">
                      <path d="M3 5.500l5 5 5-5" fill="none" stroke="#343a40" strokeWidth="1.800" strokeLinecap="round" strokeLinejoin="round" />
                    </svg>
                  </Control>
                </Field>
                <Field>
                  <Label $track={-0.19}>Contact Number</Label>
                  <Control $tall $focus>
                    <Caret>4659872090</Caret>
                    <Spinner>
                      <svg width="10" height="16" viewBox="0 0 10 16" fill="none" stroke="#8f8f9d" strokeWidth="1.500">
                        <path d="M1.500 5.500L5 2l3.500 3.500M1.500 10.500L5 14l3.500-3.500" />
                      </svg>
                    </Spinner>
                  </Control>
                </Field>
                <Submit type="button">Submit</Submit>
              </FormColumn>

              <SiteFooter>© IIT Dharwad, 2021</SiteFooter>
            </Page>
            <ScrollThumb />
          </Viewport>
        </Browser>
      </Workspace>
    </Desktop>
  );
}
